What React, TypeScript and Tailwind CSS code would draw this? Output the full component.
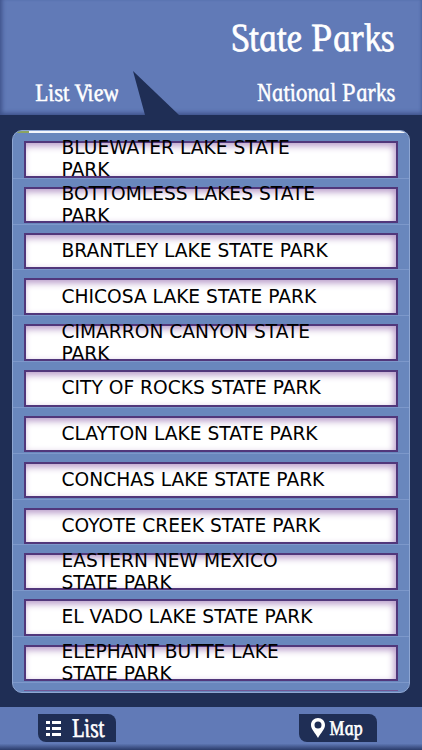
import type { ReactNode } from 'react'

const parks = [
  ['BLUEWATER LAKE STATE', 'PARK'],
  ['BOTTOMLESS LAKES STATE', 'PARK'],
  ['BRANTLEY LAKE STATE PARK'],
  ['CHICOSA LAKE STATE PARK'],
  ['CIMARRON CANYON STATE', 'PARK'],
  ['CITY OF ROCKS STATE PARK'],
  ['CLAYTON LAKE STATE PARK'],
  ['CONCHAS LAKE STATE PARK'],
  ['COYOTE CREEK STATE PARK'],
  ['EASTERN NEW MEXICO', 'STATE PARK'],
  ['EL VADO LAKE STATE PARK'],
  ['ELEPHANT BUTTE LAKE', 'STATE PARK'],
]

// Italic letterforms skewed back upright, for a calligraphic look
function ScriptText({ children, className }: { children: ReactNode; className: string }) {
  return (
    <span
      className={`inline-block whitespace-nowrap font-['Liberation_Serif',serif] italic leading-none text-white ${className}`}
    >
      {children}
    </span>
  )
}

function ListIcon() {
  return (
    <svg aria-hidden="true" className="h-[15px] w-4 shrink-0" fill="currentColor" viewBox="0 0 16 15">
      <path d="M0 0h4v3H0zM6 0h9v3H6zM0 6h4v3H0zM6 6h9v3H6zM0 12h4v3H0zM6 12h9v3H6z" />
    </svg>
  )
}

function PinIcon() {
  return (
    <svg aria-hidden="true" className="h-5 w-[14px] shrink-0" fill="currentColor" viewBox="0 0 14 20">
      <path
        clipRule="evenodd"
        d="M7 0C3 0 0 3 0 7c0 4.500 4.500 8 7 13 2.500-5 7-8.500 7-13 0-4-3-7-7-7zm0 3.500a3.500 3.500 0 1 1 0 7 3.500 3.500 0 0 1 0-7z"
        fillRule="evenodd"
      />
    </svg>
  )
}

function Header() {
  return (
    <header className="relative h-[115px] shrink-0 bg-[#617ab7] shadow-[inset_3px_-3px_4px_-1px_#3e528a,inset_-2px_0_3px_-1px_#4c629d]">
      <div className="flex h-[78px] items-start justify-end pr-[25px] pt-[18px]">
        <ScriptText className="origin-bottom-right transform-[scaleX(0.89)_skewX(11deg)] text-[40px] [-webkit-text-stroke:0.7px_white]">
          State Parks
        </ScriptText>
      </div>
      <div className="flex items-start justify-between pl-[37px] pr-[25px]">
        <ScriptText className="origin-bottom-left transform-[scaleX(0.91)_skewX(11deg)] pt-[2px] text-[25px] [-webkit-text-stroke:0.5px_white]">
          List View
        </ScriptText>
        <ScriptText className="origin-bottom-right transform-[scaleX(0.875)_skewX(11deg)] pt-[2px] text-[26px] [-webkit-text-stroke:0.5px_white]">
          National Parks
        </ScriptText>
      </div>
      <svg aria-hidden="true" className="absolute left-[133px] top-[71px] h-[44px] w-[46px]" viewBox="0 0 46 44">
        <path d="M0 0L46 44H12Z" fill="#1f2e55" />
      </svg>
    </header>
  )
}

function ParkRow({ lines }: { lines: string[] }) {
  return (
    <li className="flex h-[45.820px] flex-col border-b border-[#7d98ca] px-[11px] pt-2">
      <div className="flex h-[36.500px] flex-col justify-center border-2 border-[#51377b] bg-white pl-[35.500px] font-['DejaVu_Sans',sans-serif] text-[18.650px] leading-[22px] text-black shadow-[inset_-2px_3px_7px_#b79bc9]">
        {lines.map((line) => (
          <span className="whitespace-nowrap" key={line}>
            {line}
          </span>
        ))}
      </div>
    </li>
  )
}

export default function App() {
  return (
    <div className="flex h-[750px] w-[422px] flex-col overflow-hidden bg-[#1f2e55]">
      <Header />
      <main className="flex-1 pl-[12px] pt-[15px]">
        <div className="flex h-[563px] w-[398px] flex-col overflow-hidden rounded-[10px] border border-[#8ea6d2] bg-[#6987bd]">
          <div className="h-[2px] shrink-0 bg-linear-to-r from-[#8ba45e] from-4% to-[#f4f6fb] to-4%" />
          <ul>
            {parks.map((lines) => (
              <ParkRow key={lines[0]} lines={lines} />
            ))}
          </ul>
          <div className="mx-[11px] mt-[7px] h-px shrink-0 bg-[#715795]" />
        </div>
      </main>
      <footer className="flex h-[43px] shrink-0 items-start justify-between bg-[#617ab7] bg-linear-to-b from-[#617ab7] from-85% to-[#2b3c6b] pl-[38px] pr-[45px] pt-[7px]">
        <button className="flex h-[28px] w-[78px] items-center gap-[12px] rounded-bl-[8px] rounded-tr-[8px] bg-[#1f2e55] pl-[8px] text-white" type="button">
          <ListIcon />
          <ScriptText className="origin-bottom-left transform-[scaleX(0.8)_skewX(12deg)] text-[27px] [-webkit-text-stroke:0.6px_white]">
            List
          </ScriptText>
        </button>
        <button className="flex h-[28px] w-[78px] items-center gap-[6px] rounded-bl-[8px] rounded-tr-[8px] bg-[#1f2e55] pl-[12px] text-white" type="button">
          <PinIcon />
          <ScriptText className="origin-bottom-left transform-[scaleX(0.86)_skewX(11deg)] text-[21px] [-webkit-text-stroke:0.6px_white]">
            Map
          </ScriptText>
        </button>
      </footer>
    </div>
  )
}
